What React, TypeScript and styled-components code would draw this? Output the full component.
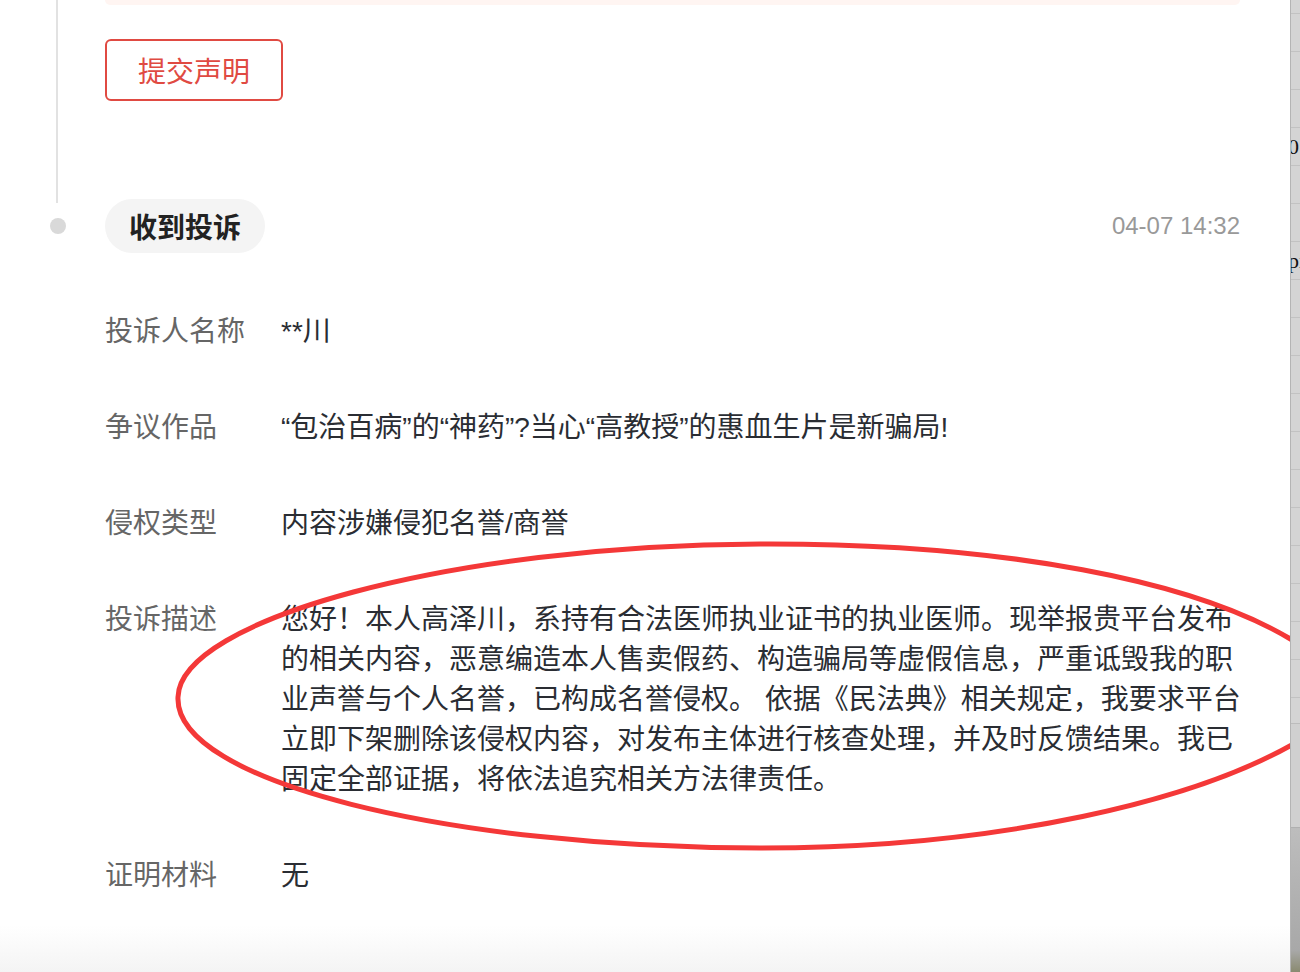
import React from "react"
import styled, { createGlobalStyle } from "styled-components"

const GlobalStyle = createGlobalStyle`
  html, body {
    margin: 0;
    padding: 0;
    background: #fff;
  }
  body {
    font-family: "Liberation Sans", "Noto Sans CJK SC", sans-serif;
    overflow: hidden;
  }
`

interface DetailItem {
  label: string
  value: string
}

const details: DetailItem[] = [
  { label: "投诉人名称", value: "**川" },
  { label: "争议作品", value: "“包治百病”的“神药”?当心“高教授”的惠血生片是新骗局!" },
  { label: "侵权类型", value: "内容涉嫌侵犯名誉/商誉" },
  {
    label: "投诉描述",
    value:
      "您好！本人高泽川，系持有合法医师执业证书的执业医师。现举报贵平台发布的相关内容，恶意编造本人售卖假药、构造骗局等虚假信息，严重诋毁我的职业声誉与个人名誉，已构成名誉侵权。 依据《民法典》相关规定，我要求平台立即下架删除该侵权内容，对发布主体进行核查处理，并及时反馈结果。我已固定全部证据，将依法追究相关方法律责任。",
  },
  { label: "证明材料", value: "无" },
]

// 右端に見えている背後のウィンドウの行
const sideRows = ["", "", "", "0", "", "", "pi", "", "", "", "", "", "", "", "", "", "", "", ""]

const App: React.FC = () => {
  return (
    <Screen>
      <GlobalStyle />
      <Main>
        <PrevItem>
          <Axis>
            <RailLine />
          </Axis>
          <PrevBody>
            <NoticeTail />
            <SubmitButton>提交声明</SubmitButton>
          </PrevBody>
        </PrevItem>

        <ItemHeader>
          <Axis>
            <Dot />
          </Axis>
          <HeaderBody>
            <StatusPill>收到投诉</StatusPill>
            <Time>04-07 14:32</Time>
          </HeaderBody>
        </ItemHeader>

        <DetailList>
          {details.map((item) => (
            <DetailRow key={item.label}>
              <Label>{item.label}</Label>
              <Value>{item.value}</Value>
            </DetailRow>
          ))}
        </DetailList>

        <Annotation viewBox="0 0 1290 972" width="1290" height="972">
          <path
            d="M178 697 C180 620 450 545 760 544 C1000 543 1200 580 1300 645 C1330 665 1335 715 1300 740 C1200 800 1000 848 760 848 C450 848 174 782 178 697 Z"
            fill="none"
            stroke="#f43838"
            strokeWidth="5"
          />
        </Annotation>
      </Main>

      <SideWindow>
        <SideRows>
          {sideRows.map((text, i) => (
            <SideRow key={i}>{text}</SideRow>
          ))}
        </SideRows>
        <SidePanel />
        <SideBottom />
      </SideWindow>
    </Screen>
  )
}

const Screen = styled.div`
  display: flex;
  width: 1300px;
  height: 972px;
  overflow: hidden;
`

const Main = styled.div`
  position: relative;
  width: 1290px;
  flex-shrink: 0;
  padding-right: 50px;
  box-sizing: border-box;
  background: linear-gradient(to bottom, #fff 0, #fff 925px, #f4f4f4 972px);
  overflow: hidden;
`

const PrevItem = styled.div`
  display: grid;
  grid-template-columns: 105px 1fr;
  height: 199px;
`

const Axis = styled.div`
  display: flex;
  align-items: center;
`

const RailLine = styled.div`
  align-self: flex-start;
  width: 2px;
  height: 203px;
  margin-left: 56px;
  background: #e2e2e2;
`

const PrevBody = styled.div`
  display: flex;
  flex-direction: column;
  align-items: flex-start;
`

const NoticeTail = styled.div`
  align-self: stretch;
  height: 5px;
  background: #fff5f2;
  border-radius: 0 0 8px 8px;
`

const SubmitButton = styled.button`
  margin-top: 34px;
  width: 178px;
  height: 62px;
  border: 2px solid #e04a42;
  border-radius: 6px;
  background: #fff;
  color: #e04a42;
  font-family: inherit;
  font-size: 28px;
  cursor: pointer;
`

const ItemHeader = styled.div`
  display: grid;
  grid-template-columns: 105px 1fr;
  height: 54px;
`

const Dot = styled.div`
  width: 16px;
  height: 16px;
  margin-left: 50px;
  border-radius: 50%;
  background: #d9d9d9;
`

const HeaderBody = styled.div`
  display: flex;
  align-items: center;
  justify-content: space-between;
`

const StatusPill = styled.div`
  height: 54px;
  padding: 0 24px;
  display: flex;
  align-items: center;
  border-radius: 27px;
  background: #f4f4f4;
  color: #222;
  font-size: 28px;
  font-weight: 600;
`

const Time = styled.div`
  font-size: 24px;
  color: #999;
`

const DetailList = styled.div`
  display: flex;
  flex-direction: column;
  gap: 56px;
  margin: 59px -12px 0 105px;
`

const DetailRow = styled.div`
  display: grid;
  grid-template-columns: 176px 1fr;
  font-size: 28px;
  line-height: 40px;
`

const Label = styled.div`
  color: #666;
  white-space: nowrap;
`

const Value = styled.div`
  color: #2a2d33;
`

const Annotation = styled.svg`
  position: absolute;
  left: 0;
  top: 0;
  pointer-events: none;
  overflow: visible;
`

const SideWindow = styled.div`
  width: 10px;
  flex-shrink: 0;
  display: flex;
  flex-direction: column;
  background: #d4d4d4;
  border-left: 1px solid #b4b4b4;
  box-sizing: border-box;
  overflow: hidden;
`

const SideRows = styled.div`
  padding-top: 13px;
  height: 710px;
  overflow: hidden;
  border-bottom: 1px solid #bcbcbc;
`

const SideRow = styled.div`
  height: 37px;
  border-top: 1px solid #c2c2c2;
  font-family: "Liberation Serif", serif;
  font-size: 22px;
  line-height: 37px;
  color: #111;
  white-space: nowrap;
  text-indent: -3px;
`

const SidePanel = styled.div`
  height: 103px;
  background: #d0d0d0;
  border-bottom: 1px solid #b0b0b0;
`

const SideBottom = styled.div`
  flex: 1;
  background: linear-gradient(to bottom, #bdbdbd, #a8a8a8 85%, #8a8a70);
`

export default App
